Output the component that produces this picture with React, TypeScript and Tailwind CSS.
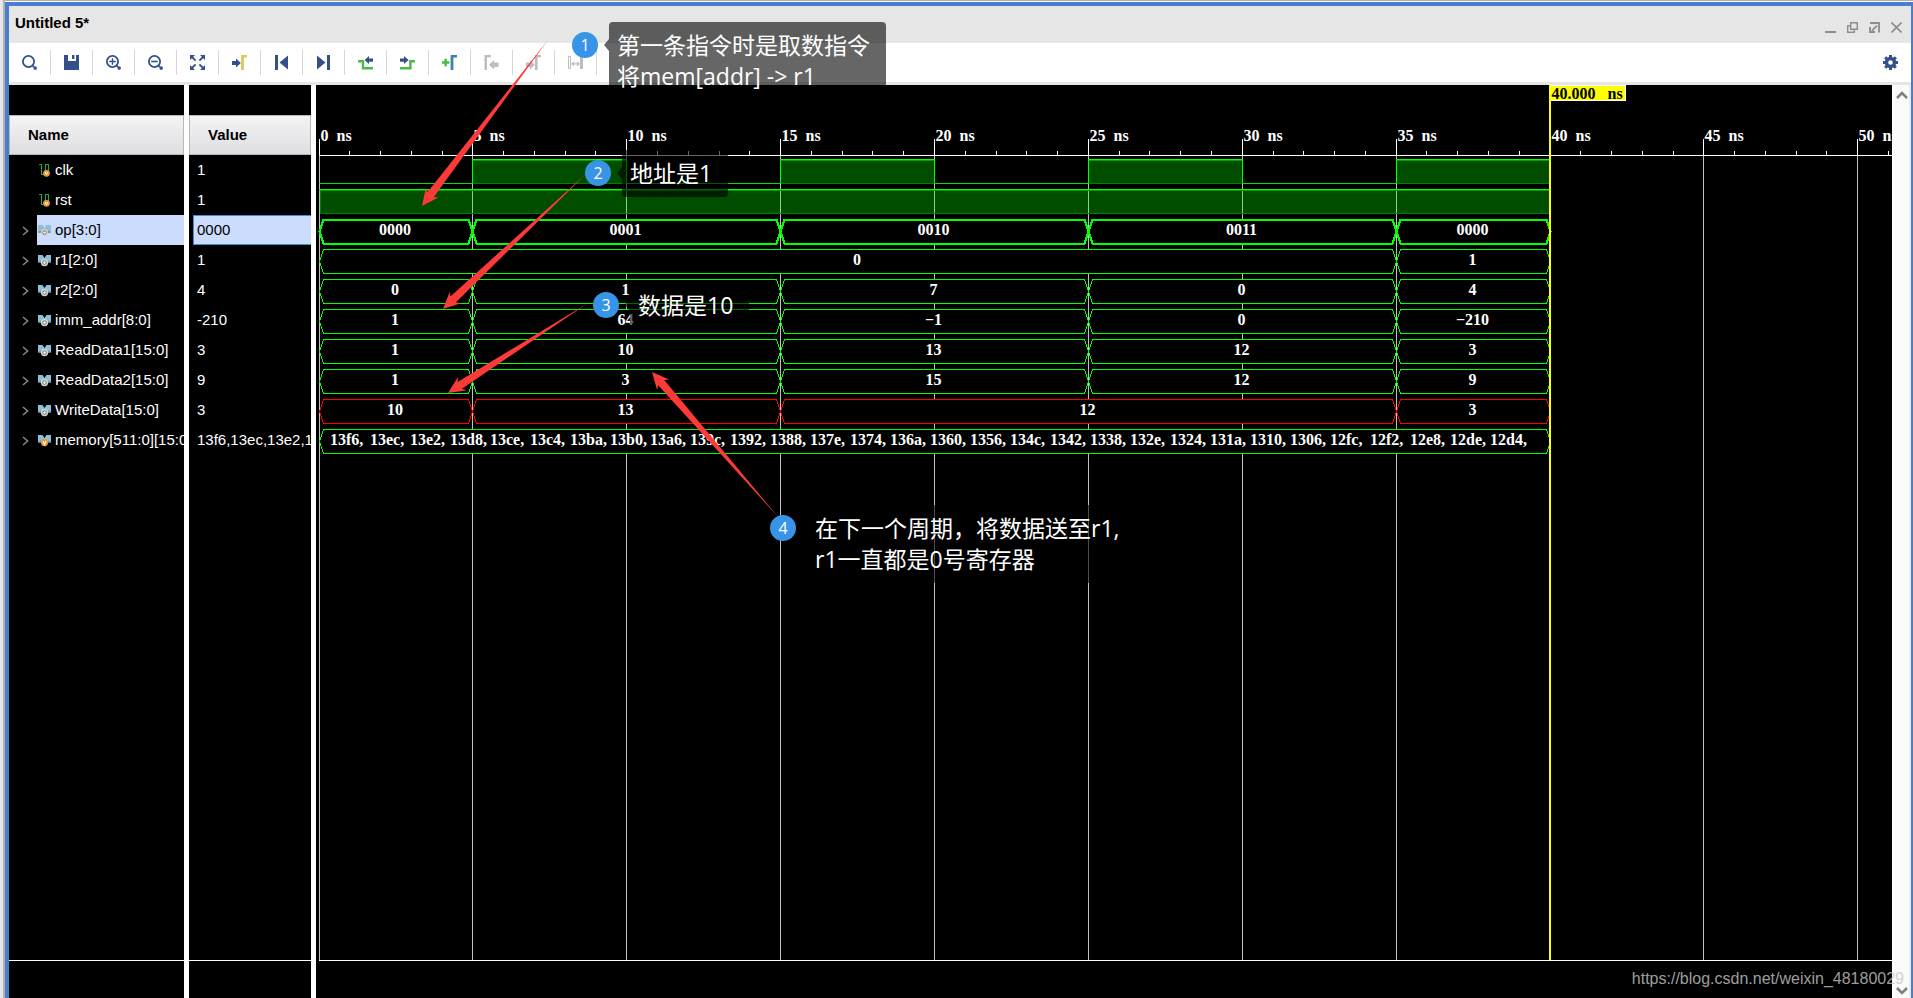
import type { ReactNode } from "react";
import { clsx } from "clsx";

type Kind = "wire" | "bus" | "memory";

interface Segment {
  from: number;
  to: number;
  label: string;
}

interface Signal {
  name: string;
  value: string;
  kind: Kind;
  color?: string;
  segments?: Segment[];
}

const MEMORY =
  "13f6,13ec,13e2,13d8,13ce,13c4,13ba,13b0,13a6,139c,1392,1388,137e,1374,136a,1360,1356,134c,1342,1338,132e,1324,131a,1310,1306,12fc,12f2,12e8,12de,12d4,";

const seg = (from: number, to: number, label: string): Segment => ({ from, to, label });

const cycles = (labels: string[]) => {
  const edges = [0, 5, 15, 25, 35, 40];
  return labels.map((label, i) => seg(edges[i], edges[i + 1], label));
};

const SIGNALS: Signal[] = [
  { name: "clk", value: "1", kind: "wire" },
  { name: "rst", value: "1", kind: "wire" },
  { name: "op[3:0]", value: "0000", kind: "bus", segments: cycles(["0000", "0001", "0010", "0011", "0000"]) },
  { name: "r1[2:0]", value: "1", kind: "bus", segments: [seg(0, 35, "0"), seg(35, 40, "1")] },
  { name: "r2[2:0]", value: "4", kind: "bus", segments: cycles(["0", "1", "7", "0", "4"]) },
  { name: "imm_addr[8:0]", value: "-210", kind: "bus", segments: cycles(["1", "64", "−1", "0", "−210"]) },
  { name: "ReadData1[15:0]", value: "3", kind: "bus", segments: cycles(["1", "10", "13", "12", "3"]) },
  { name: "ReadData2[15:0]", value: "9", kind: "bus", segments: cycles(["1", "3", "15", "12", "9"]) },
  {
    name: "WriteData[15:0]",
    value: "3",
    kind: "bus",
    color: "#ff0000",
    segments: [seg(0, 5, "10"), seg(5, 15, "13"), seg(15, 35, "12"), seg(35, 40, "3")],
  },
  { name: "memory[511:0][15:0]", value: "13f6,13ec,13e2,13", kind: "memory", segments: [seg(0, 40, "")] },
];

const SELECTED = 2;
const ROW = 30;
const RULER = 70;
const xOf = (ns: number) => Math.floor(3 + ns * 30.775) + 0.5;

const NAVY = "#34508a";
const GREEN = "#4cb944";
const GRAY = "#bdbdbd";

/* Toolbar icons, all on a 15px grid */
function Icon({ children }: { children: ReactNode }) {
  return (
    <svg width="15" height="15" viewBox="0 0 15 15" fill="none" className="block overflow-visible">
      {children}
    </svg>
  );
}

function Magnifier({ children }: { children?: ReactNode }) {
  return (
    <Icon>
      <circle cx="6.5" cy="6.5" r="5.6" stroke={NAVY} strokeWidth="1.8" />
      <path d="M10.8 10.8 L12 12" stroke={NAVY} strokeWidth="2" />
      <rect x="11.6" y="11.6" width="3.2" height="3.2" rx="1" fill={NAVY} />
      {children}
    </Icon>
  );
}

const TOOLS: { label: string; disabled?: boolean; icon: ReactNode }[] = [
  { label: "Search", icon: <Magnifier /> },
  {
    label: "Save",
    icon: (
      <Icon>
        <path d="M0 0 H4 V6 H12 V0 H15 V15 H0 Z" fill={NAVY} />
        <path d="M8 0 H10.4 V4 H8 Z" fill={NAVY} />
      </Icon>
    ),
  },
  {
    label: "Zoom In",
    icon: (
      <Magnifier>
        <path d="M3.2 6.5 H9.8 M6.5 3.2 V9.8" stroke={NAVY} strokeWidth="1.4" />
      </Magnifier>
    ),
  },
  {
    label: "Zoom Out",
    icon: (
      <Magnifier>
        <path d="M3.2 6.5 H9.8" stroke={NAVY} strokeWidth="1.6" />
      </Magnifier>
    ),
  },
  {
    label: "Zoom Fit",
    icon: (
      <Icon>
        <path d="M0 0 H5 L0 5 Z M15 0 V5 L10 0 Z M0 15 V10 L5 15 Z M15 15 H10 L15 10 Z" fill={NAVY} />
        <path d="M2 2 L5.6 5.6 M13 2 L9.4 5.6 M2 13 L5.6 9.4 M13 13 L9.4 9.4" stroke={NAVY} strokeWidth="1.8" />
      </Icon>
    ),
  },
  {
    label: "Go to Cursor",
    icon: (
      <Icon>
        <path d="M0 6 H4 V3.6 L8.8 8 L4 12.4 V10 H0 Z" fill={NAVY} />
        <path d="M9 0 H15 V2.6 H12 V15 H9 Z" fill="#e3c860" />
      </Icon>
    ),
  },
  {
    label: "Go to Time 0",
    icon: (
      <Icon>
        <path d="M1 0 H4 V15 H1 Z M14 0.5 V14.5 L5.5 7.5 Z" fill={NAVY} />
      </Icon>
    ),
  },
  {
    label: "Go to Last Time",
    icon: (
      <Icon>
        <path d="M14 0 H11 V15 H14 Z M1 0.5 V14.5 L9.5 7.5 Z" fill={NAVY} />
      </Icon>
    ),
  },
  {
    label: "Previous Transition",
    icon: (
      <Icon>
        <path d="M0 6.2 H5 V13.2 H15" stroke={GREEN} strokeWidth="2.4" />
        <path d="M15 3.4 H11 V1 L6.6 5 L11 9 V6.8 H15 Z" fill={NAVY} />
      </Icon>
    ),
  },
  {
    label: "Next Transition",
    icon: (
      <Icon>
        <path d="M0 13.2 H10.4 V6.2 H15" stroke={GREEN} strokeWidth="2.4" />
        <path d="M0 3.4 H4 V1 L8.6 5 L4 9 V6.8 H0 Z" fill={NAVY} />
      </Icon>
    ),
  },
  {
    label: "Add Marker",
    icon: (
      <Icon>
        <path d="M0 7.5 H7.4 M3.7 3.8 V11.2" stroke={GREEN} strokeWidth="2.4" />
        <path d="M8.6 0 H15 V2.4 H11.4 V15 H8.6 Z" fill="#3c82b4" />
      </Icon>
    ),
  },
  {
    label: "Previous Marker",
    disabled: true,
    icon: (
      <Icon>
        <path d="M0.5 0 H7 V2.2 H3 V15 H0.5 Z" fill={GRAY} />
        <path d="M14.5 7.6 H10 V5 L5 9.7 L10 14.4 V12 H14.5 Z" fill={GRAY} />
      </Icon>
    ),
  },
  {
    label: "Next Marker",
    disabled: true,
    icon: (
      <Icon>
        <path d="M9 0 H15 V2.2 H11.6 V15 H9 Z" fill={GRAY} />
        <path d="M0 7.6 H4 V5 L8.8 9.7 L4 14.4 V12 H0 Z" fill={GRAY} />
      </Icon>
    ),
  },
  {
    label: "Swap Cursors",
    disabled: true,
    icon: (
      <Icon>
        <path d="M0.5 1.5 H2.5 V13.5 H0.5 Z" stroke={GRAY} />
        <path d="M12 1 H15 V14 H12 Z" fill={GRAY} />
        <path d="M4 8.8 H11 M6 6.8 L4 8.8 L6 10.8 M9 6.8 L11 8.8 L9 10.8" stroke={GRAY} strokeWidth="1.2" />
      </Icon>
    ),
  },
];

const WINDOW_BUTTONS = [
  { label: "Minimize", d: "M0 10 H11", width: 2 },
  { label: "Restore", d: "M3.7 0.7 H10.3 V7.3 H3.7 Z M3.7 3.7 H0.7 V10.3 H7.3 V7.3", width: 1.4 },
  { label: "Float", d: "M1 1 H10 V10.6 M8 3.6 L3 8.6 M1 5 V10 H6", width: 1.8 },
  { label: "Close", d: "M0.5 0.5 L10.5 10.5 M10.5 0.5 L0.5 10.5", width: 1.6 },
];

function Gear() {
  return (
    <Icon>
      <circle cx="7.5" cy="7.5" r="4" stroke={NAVY} strokeWidth="3.4" />
      {[0, 45, 90, 135, 180, 225, 270, 315].map((a) => (
        <rect key={a} x="6" y="0" width="3" height="3" fill={NAVY} transform={`rotate(${a} 7.5 7.5)`} />
      ))}
    </Icon>
  );
}

function SignalIcon({ kind }: { kind: Kind }) {
  if (kind === "wire") {
    return (
      <svg width="13" height="14" viewBox="0 0 13 14" fill="none" className="shrink-0">
        <path d="M1 1.5 H3.5 V11.5 H7.5 V1.5 H10.5 V8" stroke="#2f9e49" strokeWidth="1.2" />
        <circle cx="8.5" cy="10.3" r="3.4" fill="#f0962e" />
        <path d="M7.2 9 L8.5 11.8 L9.8 9" stroke="#fff" />
      </svg>
    );
  }
  return (
    <svg width="13" height="14" viewBox="0 0 13 14" fill="none" className="shrink-0">
      <path d="M0 2 H4.5 L6.5 5 L8.5 2 H13 V9.5 H0 Z" fill="#8fbfd6" />
      <path d="M0 9.5 L2.5 7.5 L3 10 Z M13 9.5 L10.5 7.5 L10 10 Z" fill="#5d8294" />
      {kind === "memory" ? (
        <>
          <circle cx="6.5" cy="9.6" r="3.6" fill="#f0962e" />
          <path d="M5 8 L6.5 11.4 L8 8" stroke="#fff" strokeWidth="1.2" />
        </>
      ) : (
        <>
          <circle cx="6.5" cy="9.6" r="3.7" fill="#d4d4d4" />
          <circle cx="6.5" cy="9.6" r="1.8" stroke="#777" fill="#eee" />
        </>
      )}
    </svg>
  );
}

function ColumnHeader({ children }: { children: ReactNode }) {
  return (
    <div className="mt-[30px] flex h-10 shrink-0 items-center border border-[#b9b9b9] bg-linear-to-b from-[#f4f4f4] to-[#dedee2] pl-[18px] font-bold text-black">
      {children}
    </div>
  );
}

function NameColumn() {
  return (
    <div className="flex w-[175px] shrink-0 flex-col overflow-hidden bg-black">
      <ColumnHeader>Name</ColumnHeader>
      <ul className="grow">
        {SIGNALS.map((s, i) => (
          <li key={s.name} className="flex h-[30px]">
            <div className="flex w-7 shrink-0 items-center pl-[13px]">
              {s.kind !== "wire" && (
                <button type="button" aria-label={`Expand ${s.name}`}>
                  <svg width="7" height="10" viewBox="0 0 7 10" fill="none" className="mt-0.5 block">
                    <path d="M1 1 L5.6 5 L1 9" stroke="#8a8a8a" strokeWidth="1.5" />
                  </svg>
                </button>
              )}
            </div>
            <div
              className={clsx(
                "flex grow items-center gap-1 pl-px whitespace-nowrap",
                i === SELECTED ? "bg-[#cbdcfd] text-black" : "text-white"
              )}
            >
              <SignalIcon kind={s.kind} />
              {s.name}
            </div>
          </li>
        ))}
      </ul>
      <div className="h-[38px] shrink-0 border-t border-white" />
    </div>
  );
}

function ValueColumn() {
  return (
    <div className="flex w-[122px] shrink-0 flex-col overflow-hidden bg-black">
      <ColumnHeader>Value</ColumnHeader>
      <ul className="grow pl-1">
        {SIGNALS.map((s, i) => (
          <li
            key={s.name}
            className={clsx(
              "flex h-[30px] items-center overflow-hidden border border-r-0 pl-[3px] whitespace-nowrap",
              i === SELECTED ? "border-[#3f8fd0] bg-[#cbdcfd] text-black" : "border-transparent text-white"
            )}
          >
            {s.value}
          </li>
        ))}
      </ul>
      <div className="h-[38px] shrink-0 border-t border-white" />
    </div>
  );
}

function BusRow({ signal, top, bold }: { signal: Signal; top: number; bold: boolean }) {
  const y1 = top + 4.5;
  const ym = top + 16.5;
  const y2 = top + 28.5;
  return (
    <g>
      {signal.segments?.map(({ from, to, label }) => {
        const a = xOf(from);
        const b = xOf(to);
        return (
          <g key={from}>
            <path
              d={`M${a} ${ym} L${a + 4} ${y1} H${b - 4} L${b} ${ym} L${b - 4} ${y2} H${a + 4} Z`}
              fill="#000"
              stroke={signal.color ?? "#00ff00"}
              strokeWidth={bold ? 2 : 1}
              shapeRendering="crispEdges"
            />
            <text x={(a + b) / 2 - 1} y={top + 20} textAnchor="middle" fill="#fff">
              {label}
            </text>
          </g>
        );
      })}
    </g>
  );
}

function Wave() {
  const clk = RULER;
  const rst = RULER + ROW;
  const x0 = xOf(0);
  const end = xOf(40);
  const majors = Array.from({ length: 11 }, (_, i) => i * 5);
  const minors = Array.from({ length: 52 }, (_, i) => i).filter((n) => n % 5 !== 0);

  return (
    <svg className="h-0 w-full grow font-['Liberation_Serif',serif] text-[16px] font-bold">
      {majors.map((n) => (
        <g key={n}>
          <line x1={xOf(n)} x2={xOf(n)} y1={RULER} y2="100%" stroke="#c0c0c0" />
          <line x1={xOf(n)} x2={xOf(n)} y1="54" y2={RULER} stroke="#fff" />
          <text x={xOf(n) + 1} y="56" fill="#fff">
            {n} <tspan dx="4">ns</tspan>
          </text>
        </g>
      ))}
      {minors.map((n) => (
        <line key={n} x1={xOf(n)} x2={xOf(n)} y1="66" y2="70" stroke="#fff" />
      ))}
      <line x1={x0} x2="100%" y1="70.5" y2="70.5" stroke="#fff" />

      {/* clk */}
      {[5, 15, 25, 35].map((n) => (
        <g key={n}>
          <path d={`M${xOf(n - 5)} ${clk + 28.5} H${xOf(n)}`} stroke="#00e000" />
          <rect x={xOf(n)} y={clk + 4.5} width={xOf(n + 5) - xOf(n)} height="24" fill="#00ff00" fillOpacity="0.3" />
          <path d={`M${xOf(n)} ${clk + 28.5} H${xOf(n + 5)}`} stroke="#008000" />
          <path d={`M${xOf(n)} ${clk + 5.5} H${xOf(n + 5)}`} stroke="#00a000" />
          <path d={`M${xOf(n)} ${clk + 29} V${clk + 4.5} H${xOf(n + 5)} V${clk + 29}`} stroke="#00ff00" fill="none" />
        </g>
      ))}

      {/* rst */}
      <rect x={x0} y={rst + 4.5} width={end - x0} height="24" fill="#00ff00" fillOpacity="0.3" />
      <path d={`M${x0 + 1} ${rst + 5} V${rst + 28.5} H${end}`} stroke="#008000" fill="none" />
      <path d={`M${x0} ${rst + 5.5} H${end}`} stroke="#00a000" />
      <path d={`M${x0} ${rst + 4.5} H${end}`} stroke="#00ff00" />

      {SIGNALS.map(
        (s, i) => s.segments && <BusRow key={s.name} signal={s} top={RULER + ROW * i} bold={i === SELECTED} />
      )}
      <text y={RULER + ROW * 9 + 20} fill="#fff">
        {MEMORY.match(/\w+,/g)?.map((word, i) => (
          <tspan key={word} x={14 + i * 40}>
            {word}
          </tspan>
        ))}
      </text>

      {/* Cursor */}
      <rect x={end - 1.5} y="0" width="77" height="16" fill="#fff" />
      <rect x={end - 1.5} y="1" width="76" height="14" fill="#ffff00" />
      <line x1={end - 0.5} x2={end - 0.5} y1="0" y2="100%" stroke="#ffff00" strokeWidth="2" />
      <text x={end + 1} y="14" fill="#000">
        40.000 <tspan dx="8">ns</tspan>
      </text>
    </svg>
  );
}

function Scrollbar() {
  return (
    <div className="flex w-[19px] shrink-0 flex-col items-center justify-between border-x-2 border-l-white border-r-[#ececec] bg-[#fafafa] pt-1.5 pb-[3px]">
      <button type="button" aria-label="Scroll up">
        <svg width="12" height="8" viewBox="0 0 12 8" fill="none" className="block">
          <path d="M1 7 L6 2 L11 7" stroke="#808080" strokeWidth="2.6" />
        </svg>
      </button>
      <button type="button" aria-label="Scroll down">
        <svg width="12" height="8" viewBox="0 0 12 8" fill="none" className="block">
          <path d="M1 1 L6 6 L11 1" stroke="#808080" strokeWidth="2.6" />
        </svg>
      </button>
    </div>
  );
}

/* Tapered arrow running from a thin tail to a barbed head */
function arrowPath([tx, ty]: number[], [hx, hy]: number[]) {
  const len = Math.hypot(hx - tx, hy - ty);
  const ux = (hx - tx) / len;
  const uy = (hy - ty) / len;
  const at = (back: number, side: number) => `${hx - ux * back - uy * side} ${hy - uy * back + ux * side}`;
  return `M${tx} ${ty} L${at(14, 4)} L${at(17, 8)} L${hx} ${hy} L${at(17, -8)} L${at(14, -4)} Z`;
}

const ARROWS = [
  [[548, 40], [422, 206]],
  [[587, 173], [443, 309]],
  [[588, 303], [448, 393]],
  [[779, 518], [652, 372]],
];

function Note({ n, className, children }: { n: number; className: string; children: ReactNode }) {
  return (
    <div className={clsx("absolute flex items-start", className)}>
      <span className="mt-2.5 flex size-[26px] items-center justify-center rounded-full bg-[#3794e6] text-[16px] leading-none">
        {n}
      </span>
      <svg width="5" height="12" viewBox="0 0 5 12" className="mt-[17px] ml-1.5">
        <path d="M5 0 V12 L0 6 Z" fill="#000" fillOpacity="0.6" />
      </svg>
      <p className="rounded-sm bg-black/60 py-2 pr-4 pl-2 text-[23px] leading-[31px] whitespace-nowrap">{children}</p>
    </div>
  );
}

function Annotations() {
  return (
    <div className="pointer-events-none absolute inset-0 overflow-hidden font-['Open_Sans','Noto_Sans_CJK_SC',sans-serif] text-white">
      <svg className="absolute inset-0 h-full w-full">
        {ARROWS.map(([tail, head]) => (
          <path key={tail[0]} d={arrowPath(tail, head)} fill="#fc3a38" />
        ))}
      </svg>
      <Note n={1} className="top-[22px] left-[572px]">
        第一条指令时是取数指令
        <br />
        将mem[addr] -&gt; r1
      </Note>
      <Note n={2} className="top-[150px] left-[585px]">
        地址是1
      </Note>
      <Note n={3} className="top-[282px] left-[593px]">
        数据是10
      </Note>
      <Note n={4} className="top-[505px] left-[770px]">
        在下一个周期，将数据送至r1,
        <br />
        r1一直都是0号寄存器
      </Note>
      <span className="absolute right-[9px] bottom-[7px] font-['Liberation_Sans',sans-serif] text-[16px] text-[#c8c8c8]/80">
        https://blog.csdn.net/weixin_48180029
      </span>
    </div>
  );
}

export default function App() {
  return (
    <div className="relative flex min-h-screen flex-col bg-[#e6e6e6] pl-[3px] font-['Liberation_Sans',Arial,sans-serif] text-[15px]">
      <div className="flex grow flex-col border-t border-l-2 border-[#b0b0b0] bg-white pt-px">
        <div className="flex grow flex-col border-t-4 border-r-2 border-l-4 border-[#4a7dd0]">
          <header className="flex h-[37px] items-center justify-between bg-[#e6e6e6] pr-[9px] pb-[3px] pl-1.5 font-bold text-black">
            <h1>Untitled 5*</h1>
            <div className="flex gap-[11px] pt-2">
              {WINDOW_BUTTONS.map((b) => (
                <button key={b.label} type="button" aria-label={b.label}>
                  <svg width="11" height="11" viewBox="0 0 11 11" fill="none" className="block">
                    <path d={b.d} stroke="#8c8c8c" strokeWidth={b.width} />
                  </svg>
                </button>
              ))}
            </div>
          </header>

          <div className="flex h-[42px] items-center justify-between border-b-3 border-[#e6e6e6] bg-white pr-[13px]">
            <div className="flex">
              {TOOLS.map((t) => (
                <button
                  key={t.label}
                  type="button"
                  aria-label={t.label}
                  disabled={t.disabled}
                  className="flex h-[25px] w-[42px] items-center justify-center border-r border-[#d6d6d6]"
                >
                  {t.icon}
                </button>
              ))}
            </div>
            <button type="button" aria-label="Settings">
              <Gear />
            </button>
          </div>

          <main className="flex grow gap-[5px] bg-white">
            <NameColumn />
            <ValueColumn />
            <div className="flex min-w-0 grow">
              <div className="flex min-w-0 grow flex-col bg-black">
                <Wave />
                <div className="ml-[3px] h-[38px] shrink-0 border-t border-white" />
              </div>
              <Scrollbar />
            </div>
          </main>
        </div>
      </div>
      <Annotations />
    </div>
  );
}
